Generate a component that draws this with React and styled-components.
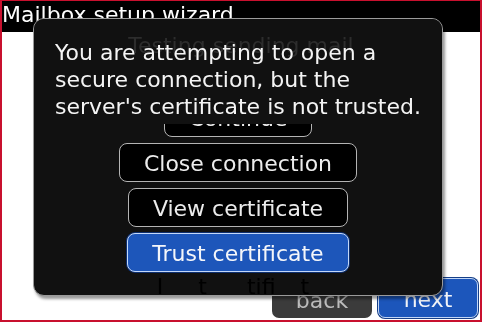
import React from "react";
import styled, { createGlobalStyle } from "styled-components";

const GlobalStyle = createGlobalStyle`
  html, body { margin: 0; padding: 0; background: #fff; }
  body { font-family: "DejaVu Sans", "Liberation Sans", sans-serif; }
  * { box-sizing: border-box; }
`;

export default function App() {
  return (
    <Frame>
      <GlobalStyle />
      <TitleBar>Mailbox setup wizard</TitleBar>
      <Page>
        <Heading>Testing sending mail</Heading>
        <Footer>
          <FooterButton>back</FooterButton>
          <FooterButton $primary>next</FooterButton>
        </Footer>
      </Page>

      <Dialog>
        <Message>
          You are attempting to open a secure connection, but the server's
          certificate is not trusted.
        </Message>
        <ButtonList>
          <ButtonScroll>
            <DialogButton>Continue</DialogButton>
            <DialogButton>Close connection</DialogButton>
            <DialogButton>View certificate</DialogButton>
            <DialogButton $primary>Trust certificate</DialogButton>
            <GhostRow>
              <span>I</span>
              <span style={{ marginLeft: 35 }}>t</span>
              <span style={{ marginLeft: 40 }}>tifi</span>
              <span style={{ marginLeft: 25 }}>t</span>
            </GhostRow>
          </ButtonScroll>
        </ButtonList>
      </Dialog>
    </Frame>
  );
}

const Frame = styled.div`
  position: relative;
  width: 482px;
  height: 322px;
  border: 2px solid #c8102e;
  border-top-width: 1px;
  background: #fff;
  display: flex;
  flex-direction: column;
  overflow: hidden;
  font-size: 22px;
`;

const TitleBar = styled.div`
  height: 31px;
  flex-shrink: 0;
  background: #000;
  color: #fff;
  line-height: 27px;
  white-space: nowrap;
`;

const Page = styled.div`
  flex: 1;
  display: flex;
  flex-direction: column;
  align-items: center;
`;

const Heading = styled.div`
  position: relative;
  z-index: 3;
  line-height: 27px;
  color: #2d2d2d;
  mix-blend-mode: lighten;
`;

const Footer = styled.div`
  margin-top: auto;
  align-self: stretch;
  display: flex;
  justify-content: flex-end;
  align-items: flex-end;
  gap: 6px;
  padding: 0 2px 2px 0;
`;

const FooterButton = styled.button`
  width: 100px;
  height: ${(p) => (p.$primary ? "40px" : "39px")};
  padding: ${(p) => (p.$primary ? "3px 0 0" : "5px 0 0")};
  font-family: inherit;
  font-size: 22px;
  line-height: 1;
  border-radius: 7px;
  border: ${(p) => (p.$primary ? "1px solid #c2d6f6" : "none")};
  background: ${(p) => (p.$primary ? "#1c56bb" : "#3b3b3b")};
  color: ${(p) => (p.$primary ? "#f2f4f8" : "#bcbcbc")};
  box-shadow: ${(p) => (p.$primary ? "0 0 0 1px #163f88" : "none")};
`;

const Dialog = styled.div`
  position: absolute;
  z-index: 2;
  left: 31px;
  top: 17px;
  width: 410px;
  height: 278px;
  background: #111;
  border: 1px solid #9a9a9a;
  border-radius: 11px;
  box-shadow: 2px 3px 3px rgba(0, 0, 0, 0.4);
  display: flex;
  flex-direction: column;
  overflow: hidden;
`;

const Message = styled.div`
  padding: 20px 16px 4px 21px;
  color: #f4f4f4;
  line-height: 27px;
  background: #111;
`;

const ButtonList = styled.div`
  flex: 1;
  overflow: hidden;
`;

const ButtonScroll = styled.div`
  margin-top: -26px;
  display: flex;
  flex-direction: column;
  align-items: center;
  gap: 6px;
`;

const DialogButton = styled.button`
  height: 39px;
  padding: 3px 24px 0;
  font-family: inherit;
  font-size: 22px;
  line-height: 1;
  white-space: nowrap;
  border-radius: 8px;
  border: 1px solid ${(p) => (p.$primary ? "#c4d8f8" : "#b4b4b4")};
  background: ${(p) => (p.$primary ? "#1d56ba" : "#000")};
  color: ${(p) => (p.$primary ? "#f4f6fa" : "#ececec")};
  box-shadow: ${(p) => (p.$primary ? "0 0 0 1px #0e2f6e" : "none")};
`;

const GhostRow = styled.div`
  display: flex;
  margin-right: 10px;
  margin-top: -2px;
  color: #000;
  line-height: 22px;
`;
